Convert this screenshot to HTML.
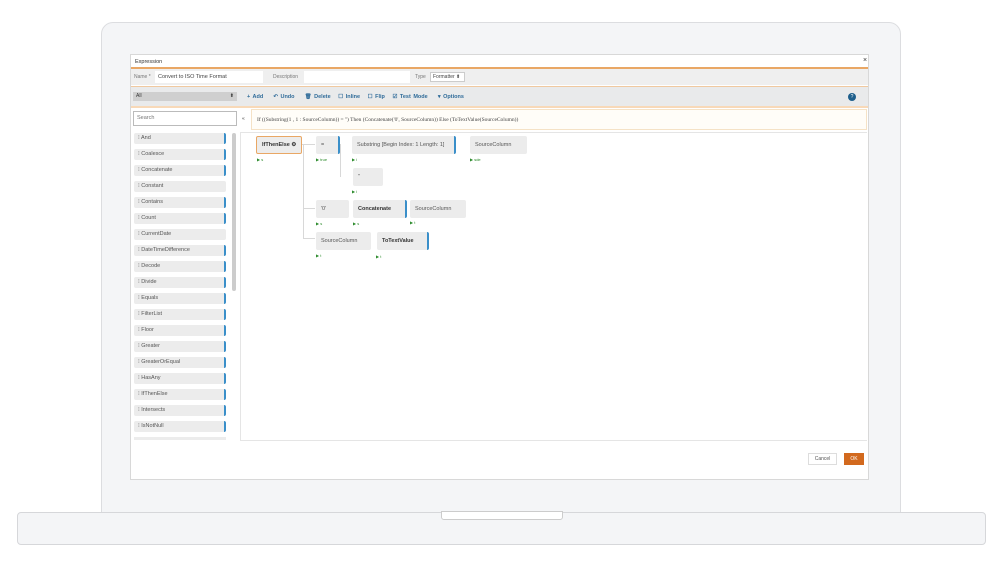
<!DOCTYPE html>
<html><head><style>
*{box-sizing:border-box;margin:0;padding:0}
body{width:1000px;height:563px;background:#fff;position:relative;overflow:hidden;font-family:"Liberation Sans",sans-serif;font-size:6px;color:#444}
.a{position:absolute}
.item{position:absolute;left:134px;width:92px;height:11px;background:#ececec;border-radius:2px;border-right:2px solid #3a8fc9;font-size:5.5px;line-height:11px;padding-left:4px;color:#555}
.node{position:absolute;background:#ececec;border-radius:2px;font-size:5.5px;color:#555;line-height:18px;padding-left:5px}
.g{position:absolute;font-size:4px;color:#2a8a2a}
.ln{position:absolute;background:#d8d8d8}
</style></head><body>
<div class="a" style="left:101px;top:22px;width:800px;height:492px;background:#f4f5f7;border:1px solid #dcdde0;border-radius:12px 12px 0 0"></div>
<div class="a" style="left:17px;top:512px;width:969px;height:33px;background:#f4f5f7;border:1px solid #d6d7da;border-radius:4px"></div>
<div class="a" style="left:441px;top:511px;width:122px;height:9px;background:#fff;border:1px solid #ccc;border-radius:0 0 3px 3px"></div>
<div class="a" style="left:130px;top:54px;width:739px;height:426px;background:#fff;border:1px solid #d8d8d8"></div>
<div class="a" style="left:135px;top:59px;font-size:5.5px;color:#333">Expression</div>
<div class="a" style="left:863px;top:57px;font-size:7px;color:#333">×</div>
<div class="a" style="left:131px;top:67px;width:737px;height:2px;background:#e9a765"></div>
<div class="a" style="left:131px;top:69px;width:737px;height:16px;background:#efefef"></div>
<div class="a" style="left:134px;top:74px;font-size:5px;color:#777">Name *</div>
<div class="a" style="left:155px;top:71px;width:108px;height:12px;background:#fff;font-size:5.5px;line-height:12px;padding-left:3px;color:#444">Convert to ISO Time Format</div>
<div class="a" style="left:273px;top:74px;font-size:5px;color:#777">Description</div>
<div class="a" style="left:304px;top:71px;width:106px;height:12px;background:#fff"></div>
<div class="a" style="left:415px;top:74px;font-size:5px;color:#777">Type</div>
<div class="a" style="left:430px;top:72px;width:35px;height:10px;background:#fff;border:1px solid #ccc;font-size:5px;line-height:8px;padding-left:2px">Formatter ⬍</div>
<div class="a" style="left:131px;top:86px;width:737px;height:1px;background:#f0c9a0"></div>
<div class="a" style="left:131px;top:87px;width:737px;height:19px;background:#e9eaeb"></div>
<div class="a" style="left:133px;top:92px;width:104px;height:9px;background:#cfcfcf;font-size:5px;line-height:9px;padding-left:3px;color:#333">All<span style="float:right;margin-right:3px">⬍</span></div>
<div class="a" style="left:247px;top:94px;font-size:5.5px;color:#2f6b99;font-weight:bold;word-spacing:1px">+ Add &nbsp; &nbsp;↶ Undo &nbsp; &nbsp;🗑 Delete &nbsp; ☐ Inline &nbsp; ☐ Flip &nbsp; ☑ Test Mode &nbsp; &nbsp;▾ Options</div>
<div class="a" style="left:848px;top:93px;width:8px;height:8px;border-radius:50%;background:#1e5f8c;color:#fff;font-size:5px;line-height:8px;text-align:center">?</div>
<div class="a" style="left:131px;top:106px;width:737px;height:2px;background:#f8d9b8"></div>
<div class="a" style="left:133px;top:111px;width:104px;height:15px;background:#fff;border:1px solid #bbb;font-size:5.5px;line-height:13px;padding-left:3px;color:#777">Search</div>
<div class="a" style="left:242px;top:116px;font-size:5px">«</div>
<div class="a" style="left:251px;top:109px;width:616px;height:21px;background:#fffdf8;border:1px solid #f5e2c6;font-family:'Liberation Serif',serif;font-size:5.5px;line-height:20px;padding-left:5px;color:#444">If ((Substring(1 , 1 : SourceColumn)) = '') Then (Concatenate('0', SourceColumn)) Else (ToTextValue(SourceColumn))</div>
<div class="a" style="left:232px;top:133px;width:4px;height:158px;background:#ccc;border-radius:2px"></div>
<div class="a" style="left:240px;top:132px;width:627px;height:309px;border:1px solid #e5e5e5;border-right:none"></div>
<div class="item" style="top:133px">⁝ And</div><div class="item" style="top:149px">⁝ Coalesce</div><div class="item" style="top:165px">⁝ Concatenate</div><div class="item" style="top:181px;border-right-color:#ececec">⁝ Constant</div><div class="item" style="top:197px">⁝ Contains</div><div class="item" style="top:213px">⁝ Count</div><div class="item" style="top:229px;border-right-color:#ececec">⁝ CurrentDate</div><div class="item" style="top:245px">⁝ DateTimeDifference</div><div class="item" style="top:261px">⁝ Decode</div><div class="item" style="top:277px">⁝ Divide</div><div class="item" style="top:293px">⁝ Equals</div><div class="item" style="top:309px">⁝ FilterList</div><div class="item" style="top:325px">⁝ Floor</div><div class="item" style="top:341px">⁝ Greater</div><div class="item" style="top:357px">⁝ GreaterOrEqual</div><div class="item" style="top:373px">⁝ HasAny</div><div class="item" style="top:389px">⁝ IfThenElse</div><div class="item" style="top:405px">⁝ Intersects</div><div class="item" style="top:421px">⁝ IsNotNull</div>
<div class="a" style="left:134px;top:437px;width:92px;height:3px;background:#ececec"></div>
<div class="ln" style="left:303px;top:144px;width:1px;height:94px"></div>
<div class="ln" style="left:275px;top:144px;width:40px;height:1px"></div>
<div class="ln" style="left:303px;top:208px;width:12px;height:1px"></div>
<div class="ln" style="left:303px;top:238px;width:12px;height:1px"></div>
<div class="ln" style="left:340px;top:144px;width:1px;height:33px"></div>
<div class="node" style="left:256px;top:136px;width:46px;border:1px solid #e9a765;font-weight:bold;color:#333;line-height:16px">IfThenElse ⚙</div>
<div class="node" style="left:316px;top:136px;width:24px;border-right:2px solid #3a8fc9">=</div>
<div class="node" style="left:352px;top:136px;width:104px;border-right:2px solid #3a8fc9">Substring [Begin Index: 1 Length: 1]</div>
<div class="node" style="left:470px;top:136px;width:57px">SourceColumn</div>
<div class="node" style="left:353px;top:168px;width:30px">''</div>
<div class="node" style="left:316px;top:200px;width:33px">'0'</div>
<div class="node" style="left:353px;top:200px;width:54px;border-right:2px solid #3a8fc9;font-weight:bold;color:#333">Concatenate</div>
<div class="node" style="left:410px;top:200px;width:56px">SourceColumn</div>
<div class="node" style="left:316px;top:232px;width:55px">SourceColumn</div>
<div class="node" style="left:377px;top:232px;width:52px;border-right:2px solid #3a8fc9;font-weight:bold;color:#333">ToTextValue</div>
<div class="g" style="left:257px;top:157px">▶ s</div><div class="g" style="left:316px;top:157px">▶ true</div><div class="g" style="left:352px;top:157px">▶ i</div><div class="g" style="left:470px;top:157px">▶ sde</div>
<div class="g" style="left:352px;top:189px">▶ i</div><div class="g" style="left:316px;top:221px">▶ s</div><div class="g" style="left:353px;top:221px">▶ s</div><div class="g" style="left:410px;top:220px">▶ t</div>
<div class="g" style="left:316px;top:253px">▶ t</div><div class="g" style="left:376px;top:254px">▶ t</div>
<div class="a" style="left:808px;top:453px;width:29px;height:12px;border:1px solid #ddd;font-size:5px;line-height:10px;text-align:center;color:#555">Cancel</div>
<div class="a" style="left:844px;top:453px;width:20px;height:12px;background:#d2691e;font-size:5px;line-height:12px;text-align:center;color:#fff">OK</div>
</body></html>
